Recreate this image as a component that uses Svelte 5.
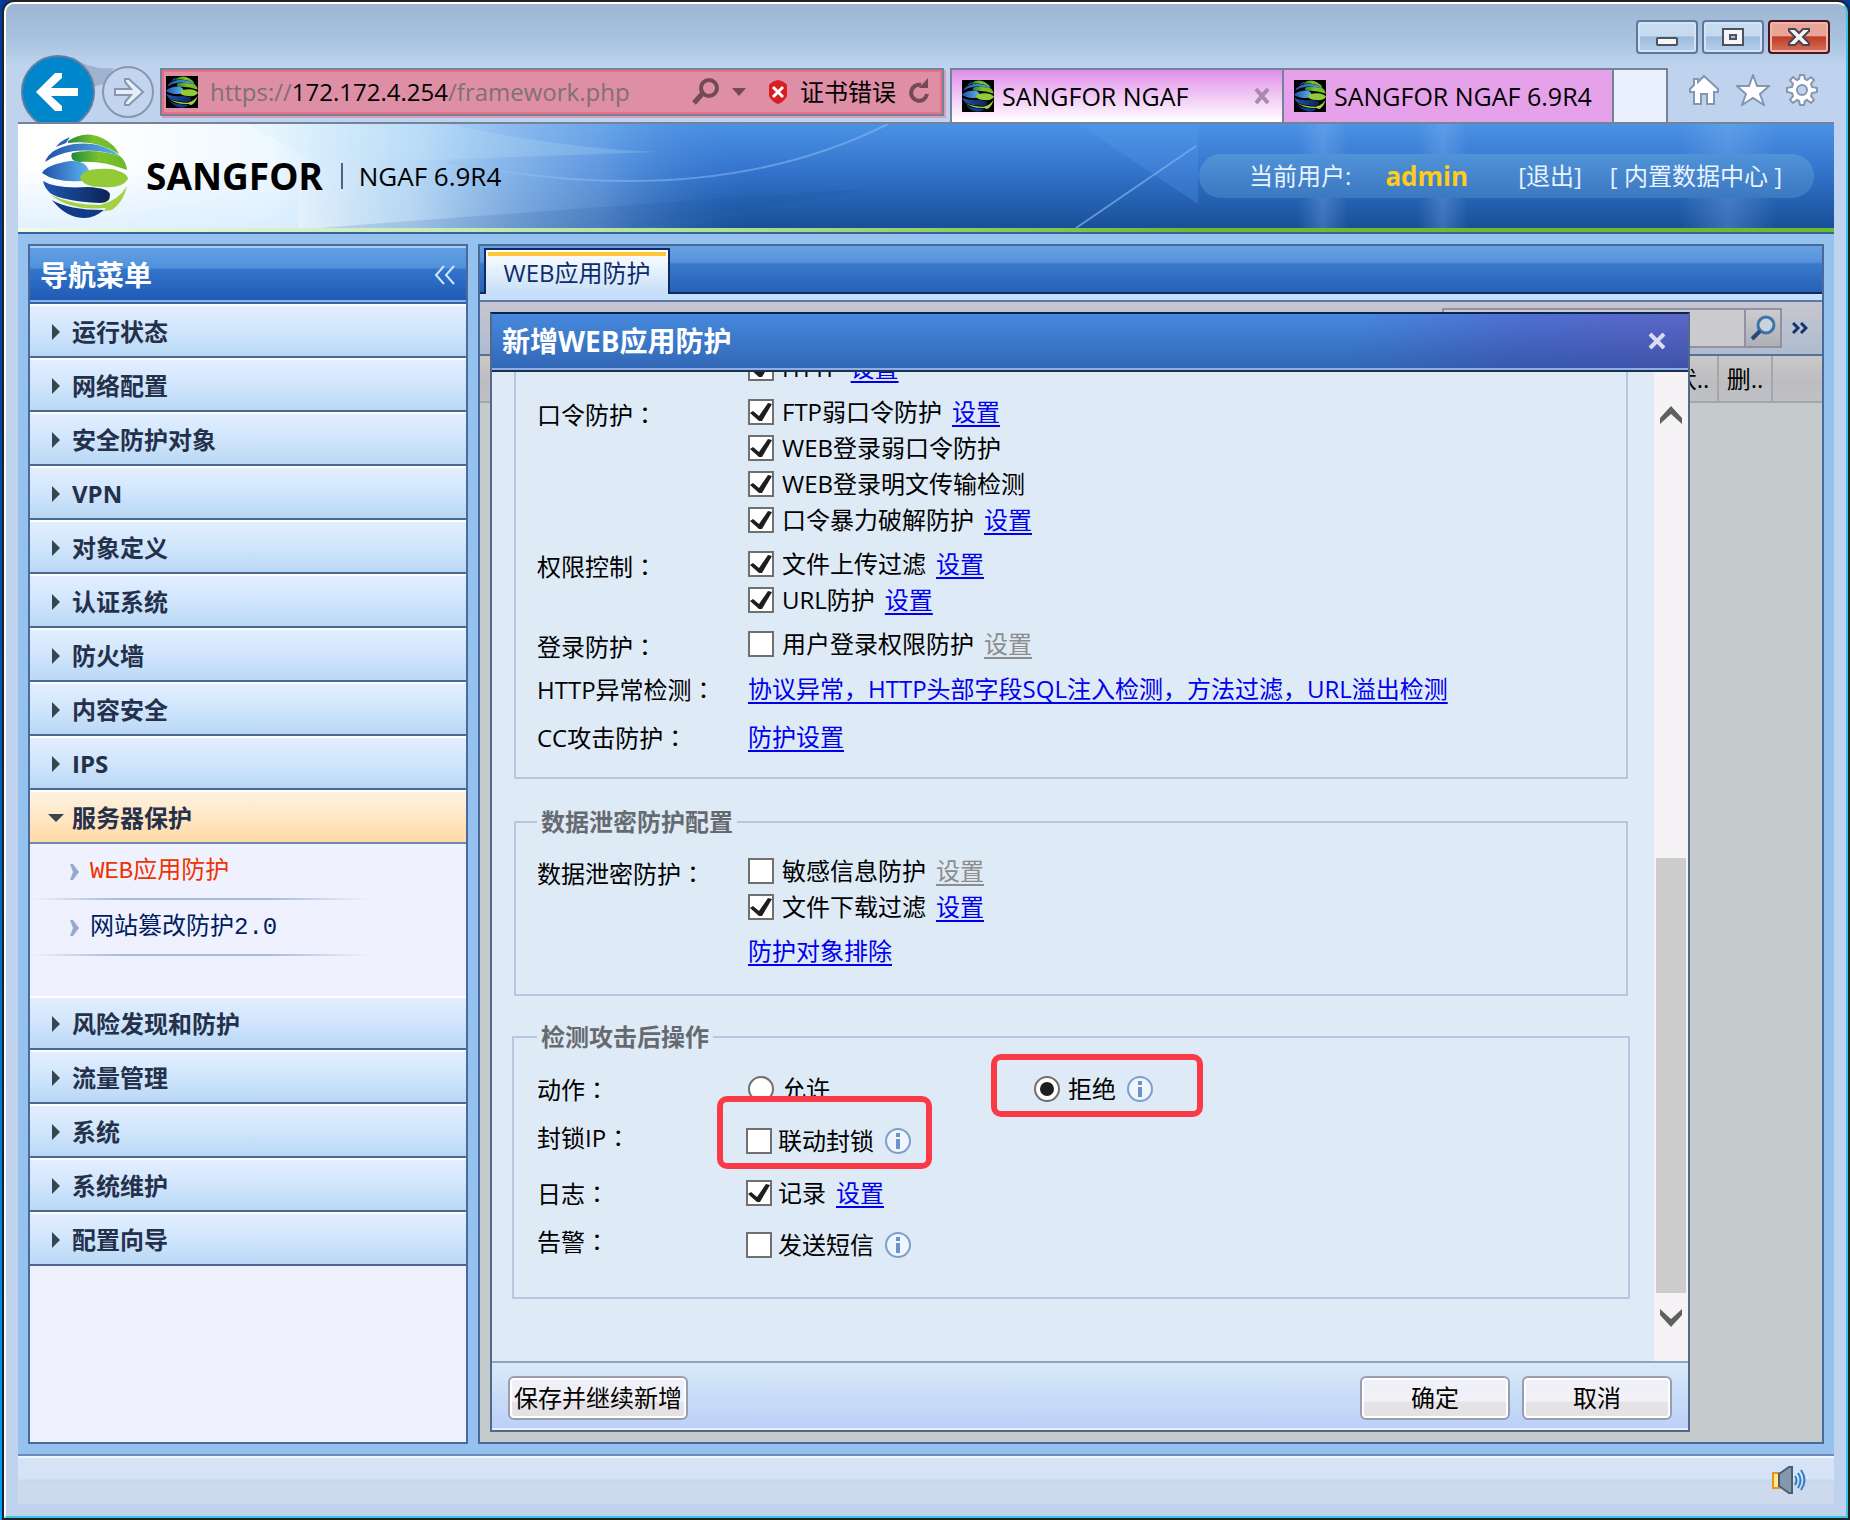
<script lang="ts">
	type Option = { id: string; text: string; checked: boolean; link?: 'on' | 'off' };

	const menuTop = ['运行状态', '网络配置', '安全防护对象', 'VPN', '对象定义', '认证系统', '防火墙', '内容安全', 'IPS'];
	const menuBottom = ['风险发现和防护', '流量管理', '系统', '系统维护', '配置向导'];
	const subMenu = ['WEB应用防护', '网站篡改防护2.0'];

	const protection: { label: string; options: Option[] }[] = [
		{ label: '', options: [{ id: 'http', text: 'HTTP', checked: true, link: 'on' }] },
		{
			label: '口令防护',
			options: [
				{ id: 'ftp-weak', text: 'FTP弱口令防护', checked: true, link: 'on' },
				{ id: 'web-weak', text: 'WEB登录弱口令防护', checked: true },
				{ id: 'web-plain', text: 'WEB登录明文传输检测', checked: true },
				{ id: 'brute', text: '口令暴力破解防护', checked: true, link: 'on' }
			]
		},
		{
			label: '权限控制',
			options: [
				{ id: 'upload', text: '文件上传过滤', checked: true, link: 'on' },
				{ id: 'url', text: 'URL防护', checked: true, link: 'on' }
			]
		},
		{ label: '登录防护', options: [{ id: 'login', text: '用户登录权限防护', checked: false, link: 'off' }] }
	];

	const leak: Option[] = [
		{ id: 'sensitive', text: '敏感信息防护', checked: false, link: 'off' },
		{ id: 'download', text: '文件下载过滤', checked: true, link: 'on' }
	];

	let action = $state('deny');
</script>

{#snippet globe(size: number, dark: boolean)}
	<svg width={size} height={size} viewBox="0 0 86 86" aria-hidden="true">
		<defs>
			<linearGradient id="globe-blue" x1="0" x2="1">
				<stop offset="0" stop-color="#1f50a8" />
				<stop offset="1" stop-color="#5fb4ee" />
			</linearGradient>
			<linearGradient id="globe-green" x1="0" x2="1">
				<stop offset="0" stop-color="#1f8a3c" />
				<stop offset="0.5" stop-color="#7cc22c" />
				<stop offset="1" stop-color="#6cb82a" />
			</linearGradient>
			<linearGradient id="globe-navy" x1="0" x2="1">
				<stop offset="0" stop-color="#1d58b4" />
				<stop offset="1" stop-color="#0c2354" />
			</linearGradient>
		</defs>
		{#if dark}<rect width="86" height="86" fill="#000" />{/if}
		<path d="M26 8Q44-4 62 6Q73 12 77 21Q54 6 26 10Z" fill="url(#globe-green)" />
		<path d="M14 14Q18 8 28 4L24 10Z" fill="#2a66b8" />
		<path d="M3 29Q8 15 32 11Q60 8 78 23Q55 16 32 18Q14 21 3 29Z" fill="url(#globe-blue)" />
		<path d="M30 20Q50 15 78 23Q84 28 85 37Q60 27 36 29Q27 27 30 20Z" fill="url(#globe-green)" />
		<path d="M0 40Q4 32 28 28Q44 27 47 38Q47 46 40 48Q14 50 0 40Z" fill="url(#globe-blue)" />
		<path d="M38 44Q42 34 70 36Q86 40 86 46Q80 56 60 54Q40 54 38 44Z" fill="#93cb38" />
		<path d="M1 48Q14 56 45 54Q68 55 68 62Q68 70 58 70Q20 68 8 60Q2 54 1 48Z" fill="url(#globe-navy)" />
		<path d="M9 62Q30 72 58 72Q76 68 85 53Q82 68 70 77L62 78L64 75Q28 78 9 62Z" fill="#a5d044" />
		<path d="M10 67Q26 77 62 77Q52 85 43 85Q24 85 10 67Z" fill="#123a86" />
	</svg>
{/snippet}

{#snippet info()}
	<svg class="info" width="28" height="28" viewBox="0 0 28 28" aria-label="说明" role="img">
		<circle cx="14" cy="14" r="12" fill="#eef5fd" stroke="#7c9fcb" stroke-width="2" />
		<path d="M12 6h4v4h-4zM12 12h4v10h-4z" fill="#6c93c8" />
	</svg>
{/snippet}

{#snippet check(o: Option)}
	<div class="option">
		<input type="checkbox" id={o.id} checked={o.checked} />
		<label for={o.id}>{o.text}</label>
		{#if o.link}<a href="#{o.id}" class:off={o.link === 'off'}>设置</a>{/if}
	</div>
{/snippet}

{#snippet name(text: string, high = false)}
	<div class="name" class:high>
		{#if text}{text}<span class="colon">：</span>{/if}
	</div>
{/snippet}

<div class="desktop">
	<div class="window">
		<div class="caption">
			<button aria-label="最小化">
				<svg width="24" height="20" viewBox="0 0 24 20"><rect x="2" y="11" width="20" height="7" rx="1" fill="#f6f6f6" stroke="#4d5262" stroke-width="2" /></svg>
			</button>
			<button aria-label="还原">
				<svg width="24" height="20" viewBox="0 0 24 20"><path d="M2 2h20v16H2zM9 8v4h6V8z" fill="#f6f6f6" fill-rule="evenodd" stroke="#4d5262" stroke-width="2" /></svg>
			</button>
			<button class="close" aria-label="关闭">
				<svg width="24" height="20" viewBox="0 0 24 20"><path d="M2 2h6l4 4 4-4h6v2l-6 6 6 6v2h-6l-4-4-4 4H2v-2l6-6-6-6z" fill="#f4f4f4" stroke="#4d4350" stroke-width="2" /></svg>
			</button>
		</div>

		<div class="navbar">
			<svg class="history" width="142" height="68" viewBox="0 0 142 68" role="img" aria-label="后退 前进">
				<path d="M55 3Q70 16 96 14L86 30 70 34z" fill="#9fb2d2" />
				<circle cx="40" cy="38" r="36" fill="#0086ca" stroke="#5e7f9f" stroke-width="2" />
				<path d="M18 38L37 19h7v5L33 34h27v8H33l11 10v5h-7z" fill="#fff" />
				<circle cx="110" cy="38" r="25" fill="#c3d4ee" stroke="#8798ad" stroke-width="2" />
				<path d="M97 35h16l-6-7v-3h4l14 13-14 13h-4v-3l6-7H97z" fill="#e6eefa" stroke="#8798ad" stroke-width="2" />
			</svg>
			<div class="address">
				{@render globe(32, true)}
				<div class="url" role="textbox" tabindex="0" aria-label="地址">https://<b>172.172.4.254</b>/framework.php</div>
				<svg class="find" width="56" height="28" viewBox="0 0 56 28" aria-hidden="true">
					<circle cx="17" cy="10" r="8" fill="none" stroke="#744a55" stroke-width="4" />
					<path d="M11 15L2 25" stroke="#744a55" stroke-width="5" />
					<path d="M40 10h14l-7 8z" fill="#744a55" />
				</svg>
				<svg width="20" height="26" viewBox="0 0 20 26" aria-hidden="true">
					<path d="M10 1q6 1 9 5v11q-3 6-9 8-6-2-9-8V6q3-4 9-5z" fill="#d81e22" />
					<path d="M5 8l10 10M15 8L5 18" stroke="#fff" stroke-width="3" />
				</svg>
				<span>证书错误</span>
				<button aria-label="刷新">
					<svg width="22" height="28" viewBox="0 0 22 28"><path d="M13 7A8 8 0 1 0 19 16" fill="none" stroke="#744a55" stroke-width="4" /><path d="M11 10h9V0z" fill="#744a55" /></svg>
				</button>
			</div>
			<div class="tab active">
				{@render globe(32, true)}
				<span>SANGFOR NGAF</span>
				<button aria-label="关闭标签页">
					<svg width="16" height="16" viewBox="0 0 16 16"><path d="M2 1l12 14M14 1L2 15" stroke="#a78bae" stroke-width="4" /></svg>
				</button>
			</div>
			<div class="tab">
				{@render globe(32, true)}
				<span>SANGFOR NGAF 6.9R4</span>
			</div>
			<button class="new-tab" aria-label="新建标签页"></button>
			<div class="tools">
				<svg width="32" height="32" viewBox="0 0 32 32"><path d="M16 2l14 13v3h-4v12h-7V20h-6v10H6V18H2v-3l4-4V5h4v3z" fill="#fff" stroke="#8496b0" stroke-width="2" /></svg>
				<svg width="34" height="32" viewBox="0 0 34 32"><path d="M17 1l4 11h12l-9 8 4 11-11-7-11 7 4-11-9-8h12z" fill="#fff" stroke="#8496b0" stroke-width="2" /></svg>
				<svg width="32" height="32" viewBox="0 0 32 32"><path d="M13 5l1-4h4l1 4 2 1 4-3 3 3-3 4 1 3 5 1v4l-5 1-1 3 3 4-3 3-4-3-2 1-1 4h-4l-1-4-2-1-4 3-3-3 3-4-1-3-5-1v-4l5-1 1-3-3-4 3-3 4 3z" fill="#fff" stroke="#8496b0" stroke-width="2" /><circle cx="16" cy="16" r="5" fill="#c0d2ee" stroke="#8496b0" stroke-width="2" /></svg>
			</div>
		</div>

		<div class="page">
			<header>
				<svg class="streaks" viewBox="0 0 1816 104" preserveAspectRatio="none" aria-hidden="true">
					<defs>
						<linearGradient id="sky" x2="0" y2="1">
							<stop offset="0" stop-color="#4b92e4" />
							<stop offset="0.45" stop-color="#3374cc" />
							<stop offset="1" stop-color="#194f98" />
						</linearGradient>
						<linearGradient id="fade">
							<stop offset="0.04" stop-color="#fff" />
							<stop offset="0.14" stop-color="#eef8ff" />
							<stop offset="0.22" stop-color="#c4e2fa" stop-opacity="0.9" />
							<stop offset="0.32" stop-color="#8dbcf0" stop-opacity="0.5" />
							<stop offset="0.4" stop-color="#3f80d8" stop-opacity="0" />
						</linearGradient>
						<linearGradient id="mist" x2="0" y2="1">
							<stop offset="0.4" stop-color="#cfe8ff" stop-opacity="0" />
							<stop offset="1" stop-color="#cfe8ff" stop-opacity="0.6" />
						</linearGradient>
						<linearGradient id="glow">
							<stop offset="0" stop-color="#8ec1f8" stop-opacity="0" />
							<stop offset="0.5" stop-color="#8ec1f8" stop-opacity="0.28" />
							<stop offset="1" stop-color="#8ec1f8" stop-opacity="0" />
						</linearGradient>
					</defs>
					<rect width="1816" height="104" fill="url(#sky)" />
					<rect width="1816" height="104" fill="url(#fade)" />
					<rect width="280" height="104" fill="url(#mist)" />
					<path d="M230 0H430Q540 24 640 28L300 40Z" fill="#c8ecf8" opacity="0.2" />
					<path d="M300 104Q620 80 860 64L620 104Z" fill="#1c4e9c" opacity="0.15" />
					<path d="M430 38Q690 90 870 0" fill="none" stroke="#8fc0f4" stroke-width="2" opacity="0.5" />
					<path d="M1060 0h120v80z" fill="#5ba0f0" opacity="0.25" />
					<path d="M1178 22L1058 104" stroke="#7db2ec" stroke-width="2" opacity="0.7" />
					<rect x="1280" width="50" height="104" fill="url(#glow)" />
					<rect x="1400" width="50" height="104" fill="url(#glow)" />
					<rect x="1660" width="100" height="104" fill="url(#glow)" />
				</svg>
				<div class="brand">
					{@render globe(86, false)}
					<strong>SANGFOR</strong>
					<span>NGAF 6.9R4</span>
				</div>
				<div class="user">
					<span>当前用户:</span>
					<b>admin</b>
					<a href="#logout">[退出]</a>
					<a href="#datacenter">[ 内置数据中心 ]</a>
				</div>
			</header>

			<div class="work">
				<nav>
					<div class="nav-title">
						<h2>导航菜单</h2>
						<button aria-label="收起">
							<svg width="22" height="20" viewBox="0 0 22 20"><path d="M10 1l-8 9 8 9M20 1l-8 9 8 9" fill="none" stroke="#cfe6ff" stroke-width="2" /></svg>
						</button>
					</div>
					{#each menuTop as item}
						<button class="item"><i></i>{item}</button>
					{/each}
					<button class="item open"><i></i>服务器保护</button>
					<div class="sub">
						{#each subMenu as item, n}
							<a href="#sub{n}" class:current={n === 0}>
								<svg width="9" height="16" viewBox="0 0 9 16"><path d="M0 0h3l6 8-6 8H0l3-8z" fill="#94abcd" /></svg>{item}
							</a>
						{/each}
					</div>
					{#each menuBottom as item}
						<button class="item"><i></i>{item}</button>
					{/each}
				</nav>

				<main>
					<div class="behind">
						<div class="tabs"><a href="#web">WEB应用防护</a></div>
						<div class="toolbar">
							<div class="search">
								<input type="text" aria-label="搜索" />
								<button aria-label="搜索">
									<svg width="26" height="26" viewBox="0 0 26 26"><circle cx="16" cy="10" r="8" fill="#c9d3dd" stroke="#3d74a8" stroke-width="3" /><path d="M10 16l-8 8" stroke="#24477c" stroke-width="4" /></svg>
								</button>
							</div>
							<svg width="16" height="12" viewBox="0 0 16 12"><path d="M1 1l5 5-5 5M9 1l5 5-5 5" fill="none" stroke="#12356e" stroke-width="3" /></svg>
						</div>
						<table>
							<thead>
								<tr><th class="tick"></th><th></th><th class="narrow">状..</th><th class="narrow">删..</th><th class="last"></th></tr>
							</thead>
						</table>
					</div>

					<div class="dialog" role="dialog" aria-labelledby="dialog-title">
						<div class="dialog-title">
							<h2 id="dialog-title">新增WEB应用防护</h2>
							<button aria-label="关闭">
								<svg width="18" height="18" viewBox="0 0 18 18"><path d="M2 2l14 14M16 2L2 16" stroke="#d9dcf4" stroke-width="4" /></svg>
							</button>
						</div>
						<div class="scroll">
							<form>
								<fieldset class="first">
									{#each protection as row}
										<div class="row">
											{@render name(row.label)}
											<div>
												{#each row.options as o}{@render check(o)}{/each}
											</div>
										</div>
									{/each}
									<div class="row tall">
										{@render name('HTTP异常检测')}
										<a href="#http-check">协议异常，HTTP头部字段SQL注入检测，方法过滤，URL溢出检测</a>
									</div>
									<div class="row tall">
										{@render name('CC攻击防护')}
										<a href="#cc">防护设置</a>
									</div>
								</fieldset>

								<fieldset class="leak">
									<legend>数据泄密防护配置</legend>
									<div class="row">
										{@render name('数据泄密防护')}
										<div>
											{#each leak as o}{@render check(o)}{/each}
											<a class="exclude" href="#exclude">防护对象排除</a>
										</div>
									</div>
								</fieldset>

								<fieldset class="after">
									<legend>检测攻击后操作</legend>
									<div class="row tall">
										{@render name('动作')}
										<div class="actions">
											<div class="option">
												<input type="radio" id="allow" value="allow" bind:group={action} />
												<label for="allow">允许</label>
											</div>
											<div class="option marked deny">
												<input type="radio" id="deny" value="deny" bind:group={action} />
												<label for="deny">拒绝</label>
												{@render info()}
											</div>
										</div>
									</div>
									<div class="row tall">
										{@render name('封锁IP', true)}
										<div class="option marked block">
											<input type="checkbox" id="block" />
											<label for="block">联动封锁</label>
											{@render info()}
										</div>
									</div>
									<div class="row tall">
										{@render name('日志')}
										{@render check({ id: 'log', text: '记录', checked: true, link: 'on' })}
									</div>
									<div class="row tall">
										{@render name('告警', true)}
										<div class="option">
											<input type="checkbox" id="sms" />
											<label for="sms">发送短信</label>
											{@render info()}
										</div>
									</div>
								</fieldset>
							</form>
							<div class="scrollbar">
								<button aria-label="向上滚动">
									<svg width="22" height="18" viewBox="0 0 22 18"><path d="M0 12L11 0l11 12v6L11 8 0 18z" fill="#606060" /></svg>
								</button>
								<div class="track"><div class="thumb"></div></div>
								<button aria-label="向下滚动">
									<svg width="22" height="18" viewBox="0 0 22 18"><path d="M0 6l11 12L22 6V0L11 10 0 0z" fill="#606060" /></svg>
								</button>
							</div>
						</div>
						<div class="dialog-foot">
							<button class="save">保存并继续新增</button>
							<button>确定</button>
							<button>取消</button>
						</div>
					</div>
				</main>
			</div>

			<footer>
				<svg width="34" height="28" viewBox="0 0 34 28" role="img" aria-label="声音">
					<path d="M1 7h6v15H1z" fill="#ffe98a" stroke="#e8951e" stroke-width="2" />
					<path d="M7 8L17 1h3v26h-3L7 20z" fill="#8497ad" stroke="#4d5d70" stroke-width="2" />
					<path d="M23 10q3 4 0 9M26 7q5 7 0 15M29 4q7 10 0 20" fill="none" stroke="#2b7ec9" stroke-width="2" />
				</svg>
			</footer>
		</div>
	</div>
</div>

<style>
	:global(body) {
		margin: 0;
		background: #000;
	}

	.desktop,
	.desktop * {
		box-sizing: border-box;
	}

	.desktop {
		display: flex;
		min-height: 100vh;
		padding: 2px 2px 2px 4px;
		background: linear-gradient(#003a9c, #0050b0 40%, #00a0ff);
		font: 24px/36px 'Open Sans', 'Noto Sans CJK SC', sans-serif;
		color: #000;
	}

	button {
		padding: 0;
		border: 0;
		background: none;
		font: inherit;
		color: inherit;
	}

	svg {
		display: block;
		flex: none;
	}

	h2 {
		margin: 0;
		font-size: 28px;
		font-weight: bold;
		color: #fff;
	}

	/* browser window */
	.window {
		flex: 1;
		min-width: 0;
		display: flex;
		flex-direction: column;
		padding: 0 12px 12px;
		border: 2px solid #fff;
		border-right-color: #3cc4e8;
		border-bottom-color: #3cc4e8;
		border-radius: 10px 10px 0 0;
		box-shadow: 0 0 0 2px #222;
		background: linear-gradient(#9cb6d3, #a8c2e0 36px, #b9d0ea 56px, #bfd3ef 64px);
	}

	.caption {
		display: flex;
		justify-content: flex-end;
		gap: 4px;
		padding: 16px 4px 0;
	}

	.caption button {
		display: flex;
		align-items: center;
		justify-content: center;
		width: 62px;
		height: 34px;
		border: 2px solid #5f7899;
		border-radius: 4px;
		box-shadow: inset 0 0 0 2px #d3e3f5;
		background: linear-gradient(#c6daf0 45%, #9dbbdd 50%, #b9d2ec);
	}

	.caption .close {
		border-color: #4a1420;
		box-shadow: inset 0 0 0 2px #eeb5aa;
		background: linear-gradient(#e9a498 45%, #bf3d24 50%, #d6735c);
	}

	.navbar {
		display: flex;
		align-items: flex-end;
		height: 68px;
	}

	.address {
		flex: 1;
		min-width: 0;
		display: flex;
		align-items: center;
		gap: 12px;
		height: 48px;
		margin: 0 6px 6px 0;
		padding: 0 12px 0 4px;
		border: 2px solid #74829a;
		box-shadow: inset 0 0 0 2px #ea6f85, 2px 2px 0 #d3a0ba;
		background: #de8fa5;
	}

	.url {
		flex: 1;
		color: #7f7078;
		white-space: nowrap;
	}

	.url b {
		font-weight: normal;
		color: #000;
	}

	.find {
		margin-right: 8px;
	}

	.tab {
		display: flex;
		align-items: center;
		gap: 8px;
		width: 330px;
		height: 54px;
		padding: 0 12px 0 10px;
		border: 2px solid #74829a;
		border-left: 0;
		border-bottom: 0;
		background: #e5a2ea;
		font-size: 25px;
		white-space: nowrap;
	}

	.tab.active {
		width: 334px;
		border-left: 2px solid #74829a;
		background: linear-gradient(#df8fe8, #f1c8f5 50%, #fff);
	}

	.tab span {
		flex: 1;
	}

	.new-tab {
		width: 54px;
		height: 54px;
		border: 2px solid #74829a;
		border-left: 0;
		border-bottom: 0;
		background: #eaf1fe;
	}

	.tools {
		display: flex;
		gap: 16px;
		padding: 0 16px 16px 20px;
	}

	/* product page */
	.page {
		flex: 1;
		display: flex;
		flex-direction: column;
		border-top: 2px solid #74829a;
		background: #95c1ee;
	}

	header {
		position: relative;
		display: flex;
		align-items: center;
		justify-content: space-between;
		height: 110px;
		padding: 0 20px 4px 24px;
		border-bottom: 2px solid #3a62a0;
		background: linear-gradient(90deg, #eefbe6, #a9e08d 40%, #6cbb2b 65%);
	}

	.streaks {
		position: absolute;
		inset: 0 0 4px;
		width: 100%;
		height: 104px;
	}

	.brand,
	.user {
		position: relative;
		display: flex;
		align-items: center;
		white-space: nowrap;
	}

	.brand strong {
		margin: 0 18px;
		font: bold 37px/36px 'Noto Sans', sans-serif;
	}

	.brand span {
		padding-left: 16px;
		border-left: 2px solid #4d6480;
		font-size: 26px;
		line-height: 26px;
	}

	.user {
		height: 44px;
		padding: 0 32px 0 50px;
		border-radius: 22px;
		background: linear-gradient(#5093d8, #3b78c0);
		color: #e8f3ff;
	}

	.user b {
		margin: 0 50px 0 34px;
		font-size: 26px;
		color: #ffcc1c;
	}

	.user a {
		margin-right: 28px;
		color: inherit;
		text-decoration: none;
	}

	.user a:last-child {
		margin-right: 0;
	}

	.work {
		flex: 1;
		display: flex;
		gap: 10px;
		padding: 10px;
	}

	nav {
		flex: none;
		display: flex;
		flex-direction: column;
		width: 440px;
		border: 2px solid #4b6a9c;
		background: #eff2fe;
	}

	.nav-title {
		display: flex;
		align-items: center;
		justify-content: space-between;
		height: 58px;
		padding: 0 10px;
		border-top: 2px solid #a5cdf5;
		border-bottom: 2px solid #33619f;
		box-shadow: inset 0 -2px 0 #86b3ea;
		background: linear-gradient(#62a0e6, #5092da 36%, #3275cc 40%, #1f58b2);
	}

	.item {
		display: flex;
		align-items: center;
		gap: 12px;
		height: 54px;
		padding: 4px 0 0 22px;
		border-bottom: 2px solid #4b6890;
		box-shadow: inset 0 2px 0 #fbfdff;
		background: linear-gradient(#e4efff, #d3e7fd 45%, #b9d8f5);
		font-weight: bold;
		color: #25304a;
		text-align: left;
	}

	.item i {
		width: 8px;
		height: 16px;
		background: #33474f;
		clip-path: polygon(0 0, 100% 50%, 0 100%);
	}

	.item.open {
		gap: 8px;
		padding-left: 18px;
		border-bottom-color: #7288b0;
		background: linear-gradient(#fff3e0, #ffe8c8 50%, #ffd9a3);
	}

	.item.open i {
		width: 16px;
		height: 8px;
		clip-path: polygon(0 0, 100% 0, 50% 100%);
	}

	.sub {
		padding-bottom: 40px;
	}

	.sub a {
		display: flex;
		align-items: center;
		gap: 11px;
		height: 56px;
		padding-left: 40px;
		background: linear-gradient(90deg, transparent, #a9bbdc 20%, #a9bbdc 55%, transparent 78%) left bottom / 100% 2px no-repeat;
		font-family: 'Liberation Mono', 'Noto Sans CJK SC', monospace;
		color: #001d60;
		text-decoration: none;
	}

	.sub .current {
		color: #ee3300;
	}

	/* main panel, the dialog shares its grid cell */
	main {
		flex: 1;
		min-width: 0;
		display: grid;
		border: 2px solid #4b6a9c;
		background: #c5cacc;
	}

	.behind,
	.dialog {
		grid-area: 1 / 1;
		min-width: 0;
	}

	.tabs {
		height: 56px;
		padding: 2px 0 0 4px;
		border-bottom: 2px solid #5c78a8;
		background: linear-gradient(#68a2e4, #5792da 16px, #3a7acb 18px, #2560b4 46px, #0f2c60 46px, #0f2c60 48px, #c6def8 48px);
	}

	.tabs a {
		display: block;
		width: 186px;
		height: 46px;
		padding-top: 4px;
		border: 2px solid #0f2c60;
		border-bottom: 0;
		background: linear-gradient(#ffc63a, #ffc63a) 2px 2px / 178px 4px no-repeat, linear-gradient(#fff, #c6def8);
		color: #0c2c6c;
		line-height: 38px;
		text-align: center;
		text-decoration: none;
	}

	.toolbar {
		display: flex;
		align-items: center;
		justify-content: flex-end;
		gap: 10px;
		height: 54px;
		padding-right: 14px;
		border-bottom: 2px solid #586f96;
		background: linear-gradient(#c8c6d0, #aebccf);
	}

	.search {
		display: flex;
		width: 340px;
		height: 40px;
		border: 2px solid #928fa6;
		background: #cbcbcd;
	}

	.search input {
		flex: 1;
		min-width: 0;
		border: 0;
		background: none;
	}

	.search button {
		padding: 0 4px;
		border-left: 2px solid #928fa6;
		background: linear-gradient(#cccccf, #aeb0b6);
	}

	table {
		width: 100%;
		border-collapse: collapse;
		table-layout: fixed;
	}

	th {
		height: 46px;
		padding: 0;
		border-right: 2px solid #a5a6a8;
		border-bottom: 2px solid #a5a6a8;
		background: linear-gradient(#c9c9c9, #bdbdc0 60%, #bfc1c8);
		font-weight: normal;
		white-space: nowrap;
	}

	.tick {
		width: 40px;
	}

	.narrow {
		width: 54px;
	}

	.last {
		width: 50px;
		border-right: 0;
	}

	/* dialog */
	.dialog {
		display: flex;
		flex-direction: column;
		margin: 66px 132px 10px 10px;
		border: 2px solid #53688a;
		border-top-color: #0c2450;
		background: #deeaf6;
	}

	.dialog-title {
		display: flex;
		align-items: center;
		justify-content: space-between;
		height: 58px;
		padding: 0 22px 2px 10px;
		border-bottom: 2px solid #1c3057;
		box-shadow: inset 0 -2px 0 #8fb0e4;
		background:
			linear-gradient(transparent, rgba(15, 50, 120, 0.4)),
			linear-gradient(100deg, #4789dd 72%, #5070d0 86%, #5d66c8);
	}

	.scroll {
		flex: 1;
		display: flex;
		overflow: hidden;
	}

	form {
		flex: 1;
		min-width: 0;
		padding: 0 26px 60px 22px;
	}

	fieldset {
		min-width: 0;
		margin: 29px 0 0;
		padding: 17px 0 25px 21px;
		border: 2px solid #b9c6e0;
	}

	fieldset.first {
		margin-top: -28px;
		padding: 6px 0 10px 21px;
		border-top: 0;
	}

	.after {
		margin: 27px -2px 0;
		padding: 12px 0 26px 23px;
	}

	legend {
		padding: 0 4px;
		font-weight: bold;
		line-height: 28px;
		color: #666a70;
	}

	.row {
		display: flex;
		align-items: flex-start;
		padding-bottom: 8px;
	}

	.leak .row {
		padding-bottom: 0;
	}

	.row.tall {
		align-items: center;
		height: 36px;
		padding: 0;
	}

	.row.tall:last-child {
		height: 60px;
	}

	.after .row.tall,
	.after .row.tall:last-child {
		height: 52px;
	}

	.name {
		flex: none;
		width: 211px;
		padding-top: 4px;
		line-height: 32px;
		white-space: nowrap;
	}

	.tall .name {
		padding: 0;
	}

	.tall .high {
		padding-bottom: 8px;
	}

	.after .name {
		width: 209px;
	}

	/* keeps the full-width colon centred in its cell */
	.colon {
		font-family: 'Noto Sans CJK TC', sans-serif;
	}

	.option {
		position: relative;
		display: flex;
		align-items: center;
		height: 36px;
		white-space: nowrap;
	}

	.option input {
		appearance: none;
		flex: none;
		width: 26px;
		height: 26px;
		margin: 0 8px 0 0;
		border: 2px solid #707070;
		background: #fff;
	}

	.option input:checked::after {
		content: '';
		display: block;
		width: 22px;
		height: 22px;
		background: #1e1e1e;
		clip-path: polygon(0 12px, 3px 10px, 9px 15px, 18px 2px, 22px 3px, 12px 20px, 9px 20px);
	}

	.option input[type='radio'] {
		border-radius: 50%;
	}

	.option input[type='radio']:checked::after {
		clip-path: circle(7px);
	}

	.option a,
	.info {
		margin-left: 10px;
	}

	.after .option input[type='checkbox'] {
		margin-right: 6px;
	}

	form a {
		color: #0000ee;
		white-space: nowrap;
		text-underline-offset: 4px;
		text-decoration-thickness: 2px;
	}

	form a.off {
		color: #8c8c8c;
	}

	.exclude {
		display: block;
		width: fit-content;
		margin-top: 8px;
	}

	.actions {
		display: flex;
		padding-left: 2px;
	}

	.actions .option:first-child {
		width: 286px;
	}

	/* red frames drawn over the options */
	.marked::after {
		content: '';
		position: absolute;
		inset: -17px -49px -10px -43px;
		border: 6px solid #fb3a48;
		border-radius: 10px;
	}

	.block::after {
		inset: -27px -20px -10px -29px;
	}

	.scrollbar {
		flex: none;
		display: flex;
		flex-direction: column;
		width: 34px;
		padding: 18px 2px;
		background: #f6f3f6;
	}

	.scrollbar button {
		display: flex;
		align-items: center;
		justify-content: center;
		height: 50px;
	}

	.track {
		flex: 1;
		display: flex;
		flex-direction: column;
		justify-content: flex-end;
	}

	.thumb {
		height: 51%;
		background: #cdcdcd;
	}

	.dialog-foot {
		display: flex;
		gap: 12px;
		padding: 13px 16px 8px;
		border-top: 2px solid #8ea4c4;
		border-bottom: 2px solid #e8f0fc;
		background: linear-gradient(#d8eaf8, #c9ddf8 50%, #bccff7);
	}

	.dialog-foot button {
		width: 150px;
		height: 44px;
		border: 2px solid #9a9cb0;
		border-radius: 6px;
		box-shadow: inset 0 0 0 2px #fff;
		background: linear-gradient(#efeff8, #f3f1f6 58%, #e5e2e6 60%);
		line-height: 38px;
		white-space: nowrap;
	}

	.dialog-foot .save {
		width: 180px;
		margin-right: auto;
	}

	footer {
		display: flex;
		align-items: center;
		justify-content: flex-end;
		height: 50px;
		padding-right: 28px;
		border-top: 2px solid #7089b8;
		background: linear-gradient(#eff5ff 2px, #d6e3f6 2px, #d6e3f6 48%, #c6d9f0 50%, #cdd9ec 60%);
	}
</style>
